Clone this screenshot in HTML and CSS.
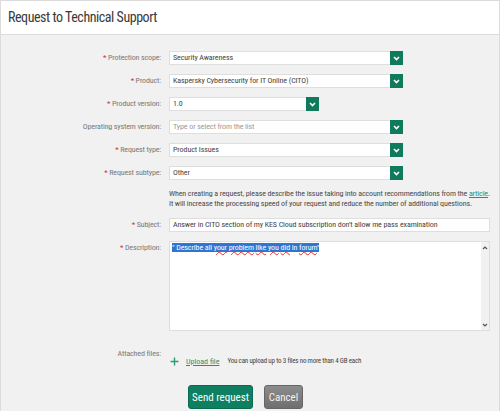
FILE: index.html
```html
<!DOCTYPE html>
<html>
<head>
<meta charset="utf-8">
<link rel="stylesheet" href="styles.css">
</head>
<body>
<div class="page">
  <div class="header"><h1 class="title">Request to Technical Support</h1></div>
  <div class="form">
    <div class="row">
      <div class="lbl"><span class="req">*</span> Protection scope:</div>
      <div class="field">
        <div class="select wide"><div class="box">Security Awareness</div><div class="dd"><svg width="7" height="5" viewBox="0 0 7 5"><polyline points="1,1 3.5,3.5 6,1" fill="none" stroke="#fff" stroke-width="1.6"/></svg></div></div>
      </div>
    </div>
    <div class="row">
      <div class="lbl"><span class="req">*</span> Product:</div>
      <div class="field">
        <div class="select wide"><div class="box">Kaspersky Cybersecurity for IT Online (CITO)</div><div class="dd"><svg width="7" height="5" viewBox="0 0 7 5"><polyline points="1,1 3.5,3.5 6,1" fill="none" stroke="#fff" stroke-width="1.6"/></svg></div></div>
      </div>
    </div>
    <div class="row">
      <div class="lbl"><span class="req">*</span> Product version:</div>
      <div class="field">
        <div class="select short"><div class="box">1.0</div><div class="dd"><svg width="7" height="5" viewBox="0 0 7 5"><polyline points="1,1 3.5,3.5 6,1" fill="none" stroke="#fff" stroke-width="1.6"/></svg></div></div>
      </div>
    </div>
    <div class="row">
      <div class="lbl">Operating system version:</div>
      <div class="field">
        <div class="select wide"><div class="box placeholder">Type or select from the list</div><div class="dd"><svg width="7" height="5" viewBox="0 0 7 5"><polyline points="1,1 3.5,3.5 6,1" fill="none" stroke="#fff" stroke-width="1.6"/></svg></div></div>
      </div>
    </div>
    <div class="row">
      <div class="lbl"><span class="req">*</span> Request type:</div>
      <div class="field">
        <div class="select wide"><div class="box">Product Issues</div><div class="dd"><svg width="7" height="5" viewBox="0 0 7 5"><polyline points="1,1 3.5,3.5 6,1" fill="none" stroke="#fff" stroke-width="1.6"/></svg></div></div>
      </div>
    </div>
    <div class="row">
      <div class="lbl"><span class="req">*</span> Request subtype:</div>
      <div class="field">
        <div class="select wide"><div class="box">Other</div><div class="dd"><svg width="7" height="5" viewBox="0 0 7 5"><polyline points="1,1 3.5,3.5 6,1" fill="none" stroke="#fff" stroke-width="1.6"/></svg></div></div>
      </div>
    </div>
    <div class="row">
      <div class="lbl"></div>
      <div class="field">
        <p class="info">When creating a request, please describe the issue taking into account recommendations from the <a class="link" href="#">article</a>.<br>It will increase the processing speed of your request and reduce the number of additional questions.</p>
      </div>
    </div>
    <div class="row">
      <div class="lbl"><span class="req">*</span> Subject:</div>
      <div class="field">
        <div class="input">Answer in CITO section of my KES Cloud subscription don't allow me pass examination</div>
      </div>
    </div>
    <div class="row">
      <div class="lbl"><span class="req">*</span> Description:</div>
      <div class="field">
        <div class="textarea">
          <div class="ta-text"><span class="sel">" Describe all <span class="sp">your</span> <span class="sp">problem</span> <span class="sp">like</span> <span class="sp">you</span> <span class="sp">did</span> in <span class="sp">forum</span>"</span></div>
          <div class="scroll">
            <svg width="6" height="4" viewBox="0 0 6 4"><polyline points="1,3 3,1 5,3" fill="none" stroke="#555" stroke-width="1.2"/></svg>
            <svg width="6" height="4" viewBox="0 0 6 4"><polyline points="1,1 3,3 5,1" fill="none" stroke="#555" stroke-width="1.2"/></svg>
          </div>
        </div>
      </div>
    </div>
    <div class="row attach">
      <div class="lbl">Attached files:</div>
      <div class="field upload">
        <svg class="plus" width="9" height="9" viewBox="0 0 9 9"><path d="M4.5 0.5v8M0.5 4.5h8" stroke="#2f9a78" stroke-width="1.4"/></svg>
        <a class="link upl" href="#">Upload file</a>
        <span class="hint">You can upload up to 3 files no more than 4 GB each</span>
      </div>
    </div>
    <div class="row">
      <div class="lbl"></div>
      <div class="field actions">
        <button class="btn send">Send request</button>
        <button class="btn cancel">Cancel</button>
      </div>
    </div>
  </div>
</div>
</body>
</html>
```
FILE: styles.css
```css
html, body {
  margin: 0;
  padding: 0;
}
body {
  width: 500px;
  height: 411px;
  overflow: hidden;
  background: #f0f1f0;
  font-family: "Liberation Sans Narrow", "Roboto Condensed", "DejaVu Sans Condensed", "Liberation Sans", sans-serif;
}
.page {
  box-sizing: border-box;
  width: 500px;
  height: 411px;
  border: 1px solid #dcdcdc;
  border-bottom: none;
  background: #f0f1f0;
}
.header {
  height: 33px;
  background: #fff;
  border-bottom: 1px solid #dcdcdc;
  padding-left: 7px;
}
.title {
  margin: 0;
  font-size: 14px;
  font-weight: normal;
  line-height: 33px;
  color: #3a3a3a;
  letter-spacing: -0.45px;
}
.form {
  display: flex;
  flex-direction: column;
  gap: 9px;
  padding-top: 16px;
}
.row {
  display: grid;
  grid-template-columns: 160px 321px;
  column-gap: 8px;
}
.lbl {
  font-size: 8px;
  line-height: 14px;
  color: #7a7a7a;
  text-align: right;
  letter-spacing: -0.15px;
}
.req {
  color: #d2323a;
}
.select {
  display: flex;
  height: 14px;
}
.select.wide { width: 234px; }
.select.short { width: 150px; }
.box {
  flex: 1;
  box-sizing: border-box;
  height: 14px;
  background: #fff;
  border: 1px solid #dedede;
  border-right: none;
  font-size: 8px;
  line-height: 12px;
  padding-left: 3px;
  color: #444;
  white-space: nowrap;
  overflow: hidden;
  letter-spacing: -0.1px;
}
.box.placeholder { color: #9a9a9a; }
.dd {
  width: 13px;
  height: 14px;
  background: #0f7a5c;
  display: flex;
  align-items: center;
  justify-content: center;
}
.info {
  margin: 0;
  font-size: 8px;
  line-height: 10px;
  color: #4a4a4a;
  white-space: nowrap;
  letter-spacing: -0.12px;
}
.link {
  color: #2a8f73;
  text-decoration: underline;
}
.input {
  box-sizing: border-box;
  height: 14px;
  background: #fff;
  border: 1px solid #dedede;
  font-size: 8px;
  line-height: 12px;
  padding-left: 3px;
  color: #444;
  white-space: nowrap;
  overflow: hidden;
  letter-spacing: -0.1px;
}
.textarea {
  box-sizing: border-box;
  height: 90px;
  background: #fff;
  border: 1px solid #dedede;
  display: flex;
}
.ta-text {
  flex: 1;
  padding: 1px 2px;
  font-size: 8px;
  line-height: 9px;
  letter-spacing: -0.1px;
}
.sel {
  background: #2f76d2;
  color: #fff;
}
.sp {
  text-decoration: underline wavy #e0302a;
  text-decoration-thickness: 1px;
  text-underline-offset: 1px;
}
.scroll {
  width: 8px;
  background: #f1f1f1;
  display: flex;
  flex-direction: column;
  justify-content: space-between;
  align-items: center;
  padding: 4px 0 3px;
}
.scroll svg { display: block; }
.attach { margin-top: 7px; }
.upload {
  display: flex;
  align-items: center;
  padding-top: 7px;
  height: 14px;
  font-size: 8px;
}
.plus { margin-left: 1px; margin-right: 6px; }
.upl {
  font-size: 8px;
  margin-right: 7px;
  padding: 0 1px;
}
.hint {
  font-size: 7px;
  color: #444;
  letter-spacing: -0.2px;
}
.actions {
  display: flex;
  gap: 11px;
  padding-left: 19px;
  margin-top: 8px;
}
.btn {
  height: 24px;
  border-radius: 3px;
  font-family: inherit;
  font-size: 11px;
  padding: 0;
  cursor: pointer;
}
.send {
  width: 65px;
  background: #0e7f60;
  border: 1px solid #0a6b50;
  color: #fff;
}
.cancel {
  width: 39px;
  background: linear-gradient(#8c8c8c, #6f6f6f);
  border: 1px solid #666;
  color: #f2f2f2;
}
```
